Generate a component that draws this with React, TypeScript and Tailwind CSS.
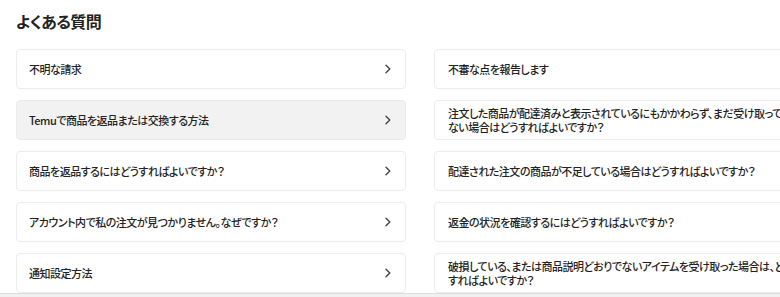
import React from "react";

const left: string[][] = [
  ["不明な請求"],
  ["Temuで商品を返品または交換する方法"],
  ["商品を返品するにはどうすればよいですか？"],
  ["アカウント内で私の注文が見つかりません。なぜですか？"],
  ["通知設定方法"],
];

const right: string[][] = [
  ["不審な点を報告します"],
  ["注文した商品が配達済みと表示されているにもかかわらず、まだ受け取ってい", "ない場合はどうすればよいですか？"],
  ["配達された注文の商品が不足している場合はどうすればよいですか？"],
  ["返金の状況を確認するにはどうすればよいですか？"],
  ["破損している、または商品説明どおりでないアイテムを受け取った場合は、ど", "すればよいですか？"],
];

function Chevron() {
  return (
    <svg width="8" height="10" viewBox="0 0 8 10" className="shrink-0">
      <path d="M2 1.2 L5.8 5 L2 8.8" fill="none" stroke="#444" strokeWidth="1.4" strokeLinecap="round" strokeLinejoin="round" />
    </svg>
  );
}

function Card({ lines, hover, right }: { lines: string[]; hover?: boolean; right?: boolean }) {
  return (
    <div
      className={`h-[40px] w-[390px] rounded-[4px] border border-[#ececec] flex items-center justify-between ${
        right ? "pl-[13px]" : "pl-[12px]"
      } pr-[13px] ${hover ? "bg-[#f2f2f2]" : "bg-white"}`}
    >
      <div className="text-[11px] leading-[14px] font-medium text-[#222] tracking-[-0.5px] [font-feature-settings:'palt'] whitespace-nowrap">
        {lines.map((l, i) => (
          <div key={i}>{l}</div>
        ))}
      </div>
      <Chevron />
    </div>
  );
}

export default function App() {
  return (
    <div
      className="w-[780px] h-[297px] overflow-hidden bg-white relative"
      style={{ fontFamily: '"Noto Sans CJK JP", "Noto Sans", sans-serif' }}
    >
      <div className="pl-[16px] pt-[9px]">
        <h2 className="text-[16px] leading-[24px] font-bold text-[#222] tracking-[-0.6px] [font-feature-settings:'palt']">よくある質問</h2>
        <div className="mt-[16px] flex gap-[28px] w-[900px]">
          <div className="flex flex-col gap-[11px]">
            {left.map((l, i) => (
              <Card key={i} lines={l} hover={i === 1} />
            ))}
          </div>
          <div className="flex flex-col gap-[11px]">
            {right.map((l, i) => (
              <Card key={i} lines={l} right />
            ))}
          </div>
        </div>
      </div>
      <div className="absolute left-0 right-0 bottom-0 h-[4px] bg-[#f0f0f0] border-t border-[#dcdcdc]" />
    </div>
  );
}
